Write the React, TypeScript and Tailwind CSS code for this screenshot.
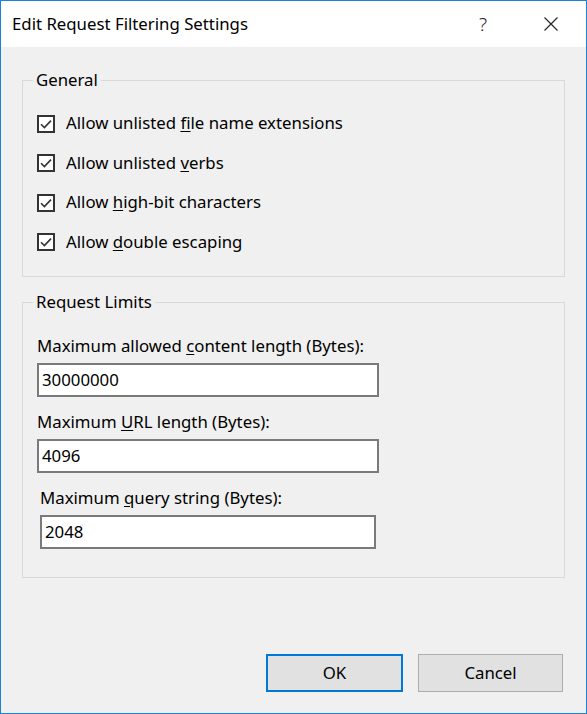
import React from "react";

const font = { fontFamily: '"Noto Sans", "Open Sans", sans-serif' };

function Check({ u, pre, post }: { u: string; pre: string; post: string }) {
  return (
    <div className="flex items-center h-[39.5px]">
      <div className="w-[18px] h-[18px] border-2 border-[#333333] bg-white flex items-center justify-center">
        <svg width="14" height="14" viewBox="0 0 14 14">
          <path d="M2 7.2 L5.4 10.6 L12 3.6" fill="none" stroke="#333333" strokeWidth="1.6" />
        </svg>
      </div>
      <span className="ml-[11px] text-[16.8px] text-black leading-none">
        {pre}
        <span className="underline underline-offset-2">{u}</span>
        {post}
      </span>
    </div>
  );
}

function Field({ pre, u, post, value, shift }: { pre: string; u: string; post: string; value: string; shift?: boolean }) {
  return (
    <div className={shift ? "flex flex-col ml-[3px] w-[336px]" : "flex flex-col w-[342px]"}>
      <div className="text-[16.8px] text-black h-[25px] leading-[25px]">
        {pre}
        <span className="underline underline-offset-2">{u}</span>
        {post}
      </div>
      <div className="mt-[5px] h-[34px] border-2 border-[#7a7a7a] bg-white flex items-center px-[3px] text-[16.8px] text-black">
        {value}
      </div>
    </div>
  );
}

export default function App() {
  return (
    <div
      className="w-[587px] h-[714px] border border-[#1883d7] bg-[#f0f0f0] flex flex-col overflow-hidden"
      style={font}
    >
      <div className="h-[46px] bg-white flex items-center shrink-0">
        <span className="ml-[11px] text-[16.8px] text-black">Edit Request Filtering Settings</span>
        <span className="ml-auto mr-[57px] text-[19px] text-[#222] font-light">?</span>
        <svg className="mr-[28px]" width="14" height="14" viewBox="0 0 14 14">
          <path d="M0.5 0.5 L13.5 13.5 M13.5 0.5 L0.5 13.5" stroke="#222" strokeWidth="1.1" />
        </svg>
      </div>
      <div className="flex-1 flex flex-col px-[21px]">
        <div className="relative mt-[33px] h-[197px] border border-[#d9d9d9] pt-[23px] pl-[14px]">
          <span className="absolute left-[10px] -top-[12px] px-[3px] bg-[#f0f0f0] text-[16.8px] text-black leading-[22px]">
            General
          </span>
          <Check pre="Allow unlisted " u="f" post="ile name extensions" />
          <Check pre="Allow unlisted " u="v" post="erbs" />
          <Check pre="Allow " u="h" post="igh-bit characters" />
          <Check pre="Allow " u="d" post="ouble escaping" />
        </div>
        <div className="relative mt-[25px] h-[276px] border border-[#d9d9d9] pt-[30px] pl-[14px] flex flex-col gap-[12px]">
          <span className="absolute left-[10px] -top-[12px] px-[3px] bg-[#f0f0f0] text-[16.8px] text-black leading-[22px]">
            Request Limits
          </span>
          <Field pre="Maximum allowed " u="c" post="ontent length (Bytes):" value="30000000" />
          <Field pre="Maximum " u="U" post="RL length (Bytes):" value="4096" />
          <Field pre="Maximum " u="q" post="uery string (Bytes):" value="2048" shift />
        </div>
        <div className="mt-auto mb-[21px] mr-[2px] flex justify-end gap-[15px]">
          <button className="w-[137px] h-[38px] border-2 border-[#0078d7] bg-[#e1e1e1] text-[16.8px] text-black">
            OK
          </button>
          <button className="w-[145px] h-[38px] border border-[#adadad] bg-[#e1e1e1] text-[16.8px] text-black">
            Cancel
          </button>
        </div>
      </div>
    </div>
  );
}
